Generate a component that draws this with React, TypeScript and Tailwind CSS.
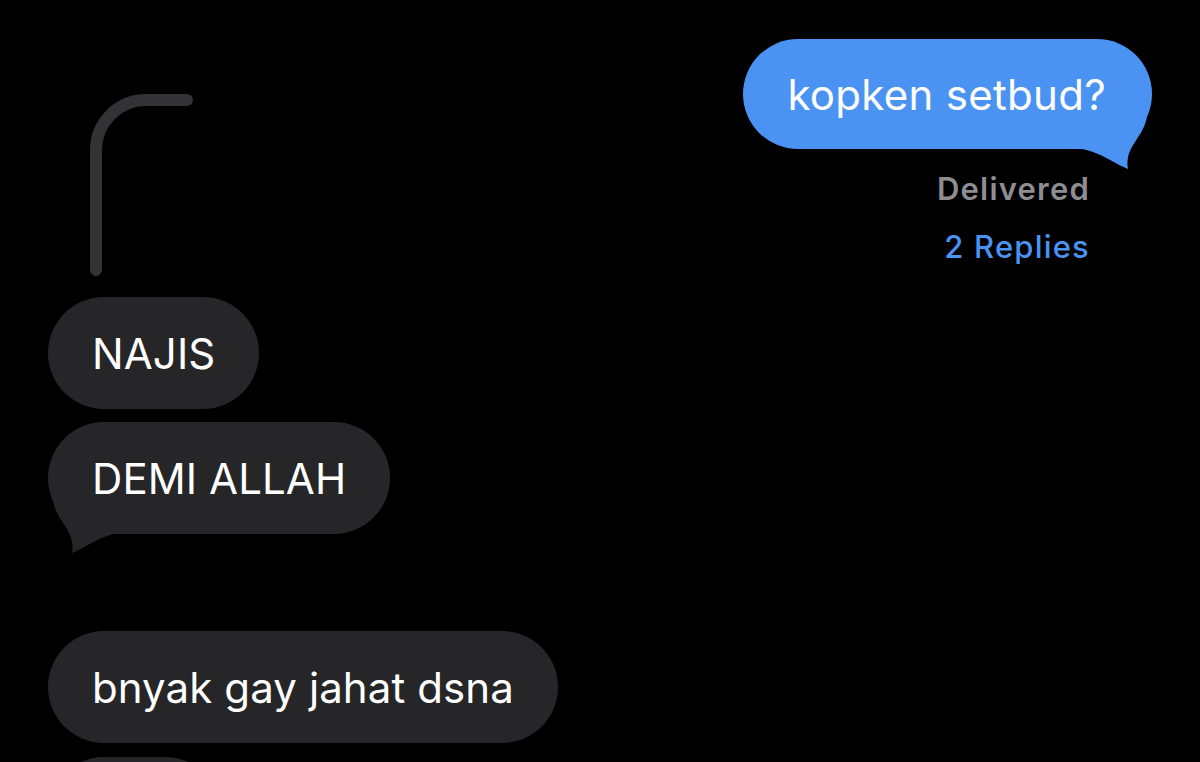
const font = { fontFamily: "Inter, 'Noto Sans', sans-serif" };

const Bubble = ({ text, tail, className }: { text?: string; tail?: boolean; className?: string }) => (
  <div className={`relative h-[112px] rounded-full bg-[#262628] px-[44px] flex items-center text-white text-[42px] tracking-[0.1px] ${className ?? ""}`}>
    {tail && (
      <svg className="absolute left-0 top-[78px]" width="72" height="56" viewBox="0 0 72 56">
        <path d="M5 0 C8 22, 28 30, 24 53 C37 48, 52 36, 70 33 L70 0 Z" fill="#262628" />
      </svg>
    )}
    <span className="relative">{text}</span>
  </div>
);

export default function App() {
  return (
    <div className="w-[1200px] h-[762px] bg-black overflow-hidden flex justify-between items-start" style={font}>
      {/* received column */}
      <div className="flex flex-col items-start pl-[48px] pt-[90px]">
        <svg className="-ml-[48px]" width="200" height="195" viewBox="0 0 200 195">
          <path d="M96 180 V60 A50 50 0 0 1 146 10 H187" fill="none" stroke="#333335" strokeWidth="12" strokeLinecap="round" />
        </svg>
        <Bubble text="NAJIS" className="mt-[12px]" />
        <Bubble text="DEMI ALLAH" tail className="mt-[13px]" />
        <Bubble text="bnyak gay jahat dsna" className="mt-[97px]" />
        <Bubble className="mt-[14px] w-[173px]" />
      </div>

      {/* sent column */}
      <div className="flex flex-col items-end pr-[48px] pt-[39px]">
        <div className="relative h-[110px] rounded-full bg-[#4a93f2] pl-[44px] pr-[46px] flex items-center text-white text-[42px] tracking-[0.3px]">
          <svg className="absolute right-0 top-[77px]" width="72" height="56" viewBox="0 0 72 56">
            <path d="M67 0 C64 22, 44 30, 48 53 C35 48, 20 36, 2 33 L2 0 Z" fill="#4a93f2" />
          </svg>
          <span className="relative">kopken setbud?</span>
        </div>
        <div className="mr-[62px] mt-[22px] flex flex-col items-end text-[31px] leading-[36px] tracking-[1.2px]">
          <span className="font-semibold text-[#8d8d92]">Delivered</span>
          <span className="mt-[22px] font-medium text-[#4a93f2]">2 Replies</span>
        </div>
      </div>
    </div>
  );
}
